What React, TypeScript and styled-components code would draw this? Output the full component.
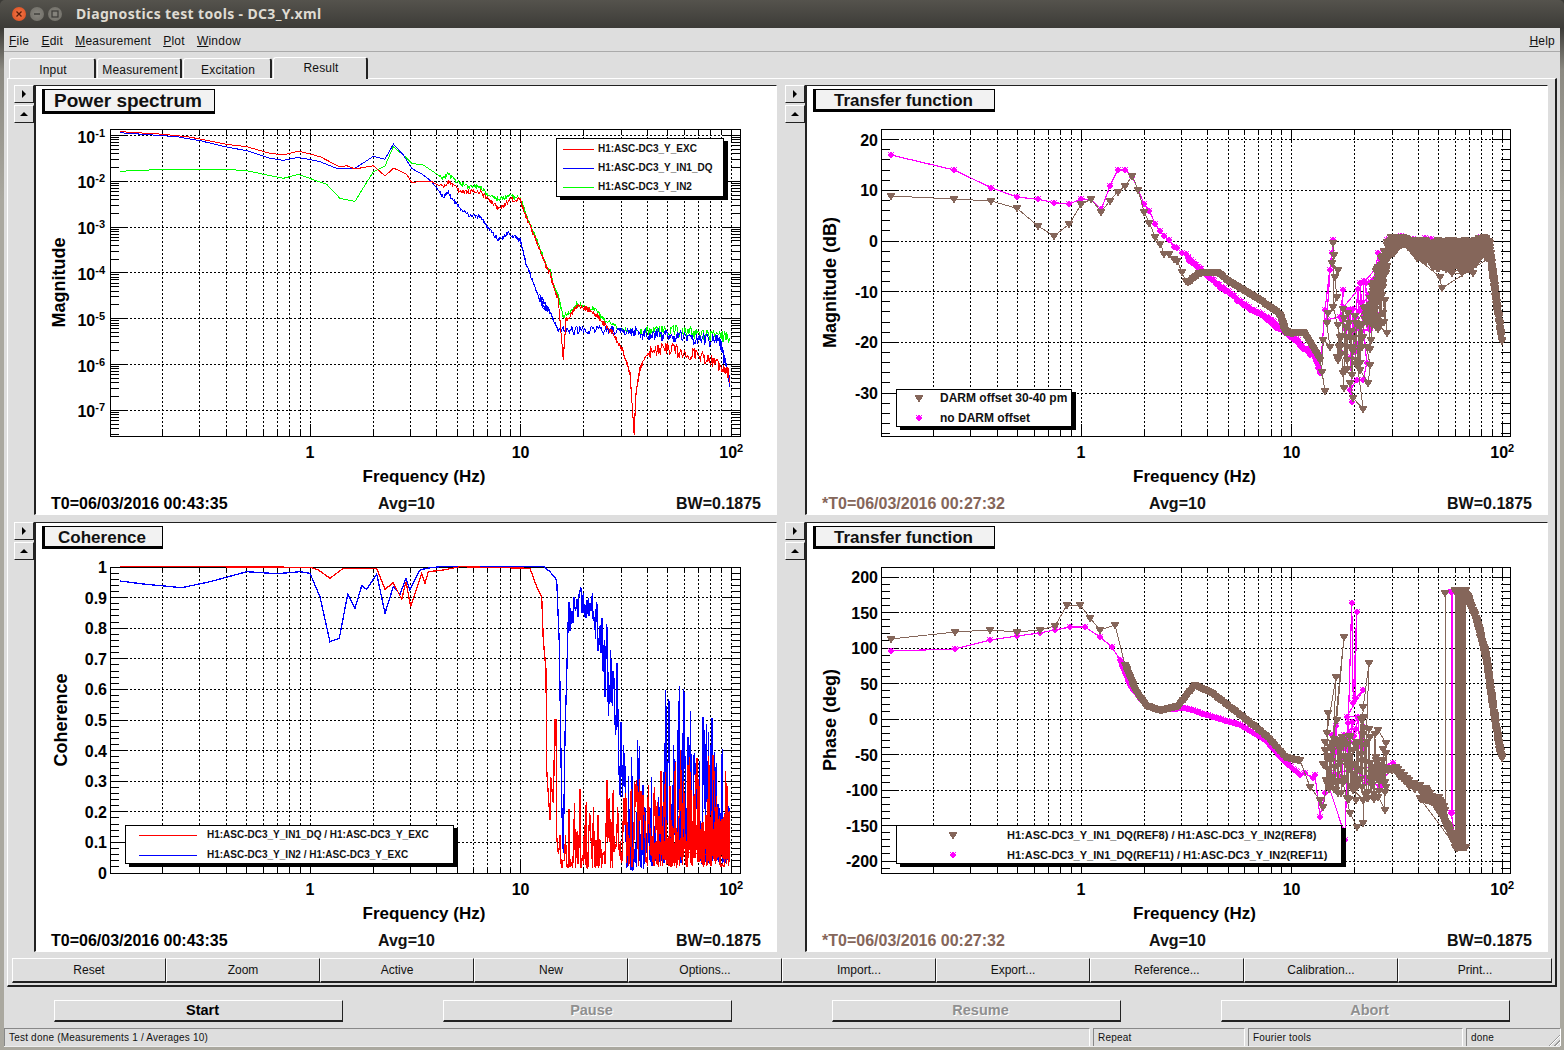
import React from "react";
import styled, { createGlobalStyle } from "styled-components";

type Pt = [number, number];
type Range = [number, number, number];

// --- data helpers: every curve is written in page pixels, read off the plots ---
function seeded(seed: number) {
  let a = seed;
  return () => {
    a = (a + 0x6d2b79f5) | 0;
    let t = Math.imul(a ^ (a >>> 15), 1 | a);
    t = (t + Math.imul(t ^ (t >>> 7), 61 | t)) ^ t;
    return ((t ^ (t >>> 14)) >>> 0) / 4294967296;
  };
}

const fromZoom = (ox: number, oy: number, pts: Pt[]): Pt[] =>
  pts.map(([x, y]) => [ox + x / 3, oy + y / 3] as Pt);

function resample(pts: Pt[], step: number): Pt[] {
  const out: Pt[] = [];
  for (let i = 0; i < pts.length - 1; i++) {
    const [x0, y0] = pts[i];
    const [x1, y1] = pts[i + 1];
    const n = Math.max(1, Math.round(Math.hypot(x1 - x0, y1 - y0) / step));
    for (let k = 0; k < n; k++) out.push([x0 + ((x1 - x0) * k) / n, y0 + ((y1 - y0) * k) / n]);
  }
  out.push(pts[pts.length - 1]);
  return out;
}

function jitter(pts: Pt[], amp: (x: number) => number, r: () => number): Pt[] {
  return pts.map(([x, y]) => [x, y + (r() - 0.5) * 2 * amp(x)] as Pt);
}

// random walk between a top and a bottom envelope, x in page pixels
function band(ox: number, oy: number, ranges: Range[], step: number, r: () => number, bias = 1): Pt[] {
  const out: Pt[] = [];
  const first = ox + ranges[0][0] / 3;
  const last = ox + ranges[ranges.length - 1][0] / 3;
  for (let x = first; x <= last; x += step) {
    const zx = (x - ox) * 3;
    let i = 0;
    while (i < ranges.length - 2 && ranges[i + 1][0] < zx) i++;
    const [a, t0, b0] = ranges[i];
    const [c, t1, b1] = ranges[i + 1];
    const f = (zx - a) / (c - a);
    const top = oy + (t0 + (t1 - t0) * f) / 3;
    const bottom = oy + (b0 + (b1 - b0) * f) / 3;
    out.push([x, bottom - (bottom - top) * Math.pow(r(), bias)]);
  }
  return out;
}

const toLine = (pts: Pt[]) => "M" + pts.map((p) => `${p[0].toFixed(1)} ${p[1].toFixed(1)}`).join("L");
const triangles = (pts: Pt[]) =>
  pts.map(([x, y]) => `M${Math.round(x) - 4.5} ${Math.round(y) - 3}h9l-4.5 8z`).join("");
const stars = (pts: Pt[]) =>
  pts
    .map(([x0, y0]) => {
      const x = Math.round(x0);
      const y = Math.round(y0);
      return `M${x - 3} ${y}h6M${x} ${y - 3}v6M${x - 2.5} ${y - 2.5}l5 5M${x + 2.5} ${y - 2.5}l-5 5`;
    })
    .join("");

interface Series {
  color: string;
  line: string;
  width: number;
  markers?: string;
  star?: boolean;
}

const RED = "#ff0000";
const BLUE = "#0000ff";
const GREEN = "#00ff00";
const BROWN = "#85665a";
const MAGENTA = "#ff00ff";

// --- power spectrum ---
const r1 = seeded(11);
const spectrumRed = jitter(
  resample(
    [
      ...fromZoom(110, 125, [[30, 20], [150, 27], [230, 35], [270, 42], [350, 58], [410, 65], [480, 85], [520, 90], [565, 78], [630, 95], [690, 126], [710, 122], [735, 132], [790, 122], [825, 153], [850, 130], [865, 135], [890, 148], [905, 173], [940, 168], [965, 170], [1000, 188], [1015, 170], [1050, 198], [1075, 202], [1110, 200], [1135, 222], [1165, 250], [1180, 245], [1200, 225], [1230, 225], [1250, 280], [1280, 350], [1310, 430], [1320, 443]]),
      ...fromZoom(530, 280, [[68, 10], [85, 60], [95, 180], [100, 235], [108, 120], [130, 95], [140, 80], [170, 85], [200, 105], [225, 135], [250, 160], [280, 215], [300, 280], [312, 462], [318, 340], [330, 265], [345, 235], [365, 210], [410, 205], [450, 215], [500, 225], [550, 245], [580, 260], [600, 290]]),
    ],
    0.8
  ),
  (x) => (x < 440 ? 0 : x < 566 ? 2.2 : x < 640 ? 2.4 : x < 650 ? 2.5 : 6.5),
  r1
);
const spectrumBlue = jitter(
  resample(
    [
      ...fromZoom(110, 125, [[30, 23], [100, 28], [200, 35], [270, 47], [350, 66], [410, 77], [480, 100], [520, 106], [565, 97], [630, 110], [680, 130], [735, 130], [790, 94], [825, 103], [850, 57], [880, 90], [905, 130], [940, 150], [965, 170], [1000, 215], [1015, 205], [1050, 250], [1075, 268], [1110, 275], [1135, 310], [1165, 345], [1195, 325], [1230, 345], [1250, 420], [1280, 500], [1300, 550], [1320, 558]]),
      ...fromZoom(530, 280, [[30, 50], [45, 90], [60, 95], [70, 120], [85, 150], [130, 150], [170, 150], [220, 150], [270, 150], [350, 160], [420, 170], [500, 175], [570, 180], [585, 250], [600, 305]]),
    ],
    0.8
  ),
  (x) => (x < 440 ? 0 : x < 560 ? 2 : x < 640 ? 4.5 : 7),
  r1
);
const spectrumGreen = jitter(
  resample(
    [
      ...fromZoom(110, 125, [[30, 139], [80, 136], [180, 133], [350, 133], [410, 137], [480, 152], [520, 160], [565, 148], [650, 178], [690, 220], [735, 229], [790, 140], [825, 123], [850, 65], [885, 95], [905, 115], [940, 120], [1000, 160], [1015, 148], [1050, 175], [1075, 185], [1110, 185], [1135, 212], [1165, 225], [1200, 212], [1230, 220], [1250, 275], [1280, 345], [1310, 425], [1320, 438]]),
      ...fromZoom(530, 280, [[68, 8], [85, 50], [100, 110], [130, 90], [140, 72], [170, 80], [200, 92], [225, 122], [280, 150], [350, 155], [420, 150], [500, 160], [600, 172]]),
    ],
    0.8
  ),
  (x) => (x < 440 ? 0 : x < 640 ? 2.2 : 6),
  r1
);

// --- magnitude transfer function ---
const r2 = seeded(23);
const magBrown: Pt[] = [
  ...fromZoom(880, 130, [[33, 198], [223, 207], [333, 213], [411, 235], [474, 288], [522, 318], [568, 282], [604, 222], [633, 208], [664, 245], [690, 212], [713, 185], [736, 167], [757, 138], [775, 180], [792, 245], [808, 278], [826, 322], [841, 342], [853, 372], [868, 372], [883, 388], [892, 392], [905, 425], [917, 452], [925, 457]]),
  ...resample(fromZoom(880, 130, [[925, 457], [940, 445], [958, 430], [975, 425], [1010, 425], [1040, 450], [1080, 475], [1130, 505], [1170, 530], [1200, 555], [1215, 600], [1240, 610]]), 2),
  ...resample(fromZoom(1270, 220, [[0, 260], [30, 285], [45, 335], [100, 335], [130, 385], [150, 420]]), 2),
  ...fromZoom(1270, 220, [[165, 512], [155, 455], [160, 360], [180, 380], [170, 310], [175, 280], [190, 260], [200, 230], [195, 170], [205, 150], [185, 130], [192, 105], [190, 70], [190, 260], [210, 350], [220, 460], [222, 505], [240, 490], [250, 535], [280, 568], [260, 420], [270, 450], [295, 490], [300, 435], [290, 380], [250, 380], [230, 350], [270, 320], [300, 300], [320, 310], [350, 340], [345, 240], [340, 280], [320, 230], [310, 205], [330, 180], [345, 160]]),
  ...band(1270, 220, [[200, 240, 430], [250, 290, 480], [300, 230, 430], [345, 160, 300]], 0.9, r2),
  ...band(1270, 220, [[300, 210, 320], [350, 60, 150], [360, 50, 110], [400, 50, 70], [440, 60, 105], [480, 60, 140], [520, 60, 150], [560, 60, 140], [600, 60, 150], [640, 50, 110], [660, 60, 120]], 0.2, r2),
  ...fromZoom(1270, 220, [[515, 205], [510, 170], [440, 115], [610, 160], [490, 140], [545, 160], [575, 160]]),
  ...jitter(resample(fromZoom(1270, 220, [[660, 90], [680, 250], [695, 360]]), 1), () => 3, r2),
];
const magMagenta: Pt[] = [
  ...fromZoom(880, 130, [[33, 75], [223, 120], [333, 173], [411, 201], [474, 208], [522, 218], [568, 222], [604, 207], [633, 208], [664, 238], [690, 168], [713, 120], [736, 120], [757, 140], [775, 180], [792, 222], [808, 242], [826, 283], [841, 303], [853, 318], [868, 330], [883, 350], [892, 355], [905, 368], [917, 372], [925, 385]]),
  ...jitter(resample(fromZoom(880, 130, [[925, 385], [958, 415], [990, 445], [1020, 470], [1050, 490], [1080, 517], [1130, 545], [1170, 570], [1200, 590], [1240, 625], [1260, 640]]), 1.5), () => 1.5, r2),
  ...jitter(resample(fromZoom(1270, 220, [[0, 310], [50, 340], [100, 385], [135, 410], [150, 460]]), 1.5), () => 1.5, r2),
  ...fromZoom(1270, 220, [[165, 270], [190, 60], [185, 100], [180, 150], [170, 300], [210, 290], [220, 210], [215, 300], [240, 275], [245, 545], [240, 510], [260, 480], [280, 480], [290, 430], [270, 190], [275, 260], [295, 225], [300, 330], [240, 330], [230, 320], [260, 380], [310, 180], [325, 100], [325, 140], [330, 130]]),
  ...band(1270, 220, [[220, 250, 460], [330, 120, 300]], 1.6, r2),
  ...band(1270, 220, [[340, 60, 130], [380, 45, 70], [450, 50, 70], [530, 60, 80], [600, 60, 80], [640, 50, 70]], 2, r2),
];

// --- coherence ---
const r3 = seeded(37);
const coBlue: Pt[] = [
  ...fromZoom(110, 560, [[30, 63], [100, 72], [215, 83], [300, 65], [410, 35], [500, 41], [570, 35], [600, 40], [630, 110], [660, 245], [688, 235], [713, 103], [735, 145], [755, 77], [770, 88], [800, 42], [825, 160], [850, 80], [870, 103], [888, 55], [900, 90], [930, 30], [950, 25], [1000, 19], [1300, 19], [1320, 35], [1340, 60], [1348, 250]]),
  ...fromZoom(540, 570, [[65, 700], [70, 850], [75, 500]]),
  ...band(540, 570, [[85, 100, 190], [130, 40, 150], [160, 70, 190], [190, 120, 350], [215, 220, 520], [240, 300, 700], [255, 530, 900]], 0.8, r3),
  ...band(540, 570, [[255, 530, 900], [300, 480, 900], [320, 600, 900], [350, 480, 880], [380, 310, 880], [420, 340, 880], [500, 430, 880], [540, 450, 880], [570, 500, 880]], 0.6, r3, 1.9),
];
const coRed: Pt[] = [
  ...fromZoom(110, 560, [[30, 19], [600, 22], [625, 30], [660, 55], [700, 25], [800, 25], [825, 88], [850, 68], [875, 118], [888, 65], [902, 140], [935, 40], [945, 70], [955, 35], [1000, 30], [1050, 20], [1260, 25], [1280, 80], [1295, 110], [1300, 240], [1308, 330]]),
  ...fromZoom(540, 570, [[20, 600], [30, 750], [32, 620], [40, 700], [45, 450], [48, 450], [50, 800]]),
  ...band(540, 570, [[55, 760, 895], [100, 680, 895], [130, 640, 895], [180, 700, 895], [205, 560, 895], [250, 640, 895], [300, 600, 895], [350, 620, 895], [420, 470, 895], [450, 540, 890], [570, 560, 890]], 0.9, r3, 2),
  ...band(540, 570, [[330, 820, 890], [400, 790, 890], [480, 760, 885], [570, 720, 885]], 0.2, r3),
];

// --- phase transfer function ---
const r4 = seeded(53);
const phaseMagentaLeft: Pt[] = [
  [891, 651], [955, 649], [990, 640], [1017, 636], [1040, 633], [1055, 630], [1070, 627], [1085, 627], [1100, 637], [1112, 647], [1120, 660],
  ...resample([[1120, 660], [1130, 685], [1145, 705], [1160, 710], [1185, 708], [1210, 716], [1240, 725], [1265, 740], [1285, 762], [1300, 775]], 2),
  ...fromZoom(1300, 570, [[15, 610], [40, 625], [45, 615], [60, 740], [75, 670], [80, 630], [130, 780], [135, 810], [155, 100], [160, 400], [170, 125], [165, 385], [190, 360], [140, 440], [175, 440], [105, 550], [200, 630], [240, 650], [280, 580]]),
  ...band(1300, 570, [[90, 470, 620], [200, 430, 660]], 2, r4),
];
const phaseMagentaRight: Pt[] = fromZoom(1300, 570, [[457, 65], [457, 730], [454, 730], [454, 65], [454, 730], [470, 835]]);

function phaseWall(): Pt[] {
  const out: Pt[] = [];
  for (let zx = 465; zx <= 497; zx += 1.5) {
    out.push([zx, zx % 3 === 0 ? 830 : 60], [zx, zx % 3 === 0 ? 60 : 830]);
  }
  return fromZoom(1300, 570, out);
}

const phaseBrownLeft: Pt[] = [
  [891, 639], [955, 632], [990, 630], [1017, 632], [1040, 630], [1055, 626], [1067, 605], [1080, 605], [1090, 618], [1100, 630], [1115, 625], [1125, 665],
  ...resample([[1125, 665], [1135, 690], [1145, 705], [1160, 710], [1180, 705], [1195, 685], [1210, 692], [1240, 715], [1265, 735], [1285, 757], [1300, 760]], 2),
  ...fromZoom(1300, 570, [[0, 570], [30, 650], [60, 690], [70, 710], [80, 640], [85, 430], [80, 490], [108, 320], [100, 520], [132, 200], [110, 450], [90, 530], [130, 640], [150, 730], [170, 770], [190, 760], [207, 280], [190, 410], [180, 600], [210, 500], [235, 480], [258, 520], [250, 570], [235, 680], [255, 720], [250, 590], [190, 690], [160, 660], [150, 500], [170, 520], [130, 510]]),
  ...band(1300, 570, [[70, 510, 660], [130, 490, 690], [190, 440, 700], [260, 520, 680]], 0.6, r4),
];
const phaseBrownRight: Pt[] = [
  ...jitter(resample(fromZoom(1300, 570, [[220, 600], [290, 600], [330, 640], [380, 665], [420, 720], [470, 830]]), 1), () => 3, r4),
  ...jitter(resample(fromZoom(1300, 570, [[360, 680], [420, 690], [435, 720]]), 1), () => 3, r4),
  ...fromZoom(1300, 570, [[435, 720], [435, 70], [435, 720], [470, 830]]),
  ...phaseWall(),
  ...jitter(resample(fromZoom(1300, 570, [[465, 62], [500, 75], [530, 150], [560, 270], [580, 420], [600, 540], [605, 565]]), 0.8), () => 2.5, r4),
];

interface Plot {
  title: string;
  titleWidth: number;
  titleHeight: number;
  left: number;
  top: number;
  frame: { l: number; r: number; t: number; b: number };
  yTitle: string;
  yTitleX: number;
  labelShift: number;
  labelGap: number;
  majors: { y: number; label: React.ReactNode }[];
  minors: number[];
  series: Series[];
  legendTextAt: number;
  legendFont: number;
  legendRow: number;
  legendBox: { left: number; top: number; width: number; height: number };
  legend: { text: string; color: string; line?: [number, number]; marker?: "tri" | "star"; cx?: number }[];
  stamp: string;
  stampColor: string;
}

function logTicks(): number[] {
  const out: number[] = [];
  for (let d = -1; d <= 1; d++) for (let m = 1; m <= 9; m++) out.push(m * Math.pow(10, d));
  return [...out.filter((f) => f > 0.11), 100];
}

const X_TICKS = logTicks();
const xOf = (frame: Plot["frame"], f: number) => frame.l + 200 + 210.6 * Math.log10(f);
const isMajorX = (f: number) => f === 1 || f === 10 || f === 100;

function linearAxis(zero: number, perUnit: number, from: number, to: number, major: number, minor: number, top: number, bottom: number, label: (v: number) => string) {
  const majors: Plot["majors"] = [];
  const minors: number[] = [];
  for (let i = Math.round(from / minor); i * minor <= to + 1e-6; i++) {
    const v = i * minor;
    const y = zero - v * perUnit;
    if (y < top || y > bottom) continue;
    const isMajor = Math.abs(v / major - Math.round(v / major)) < 1e-6;
    if (isMajor) majors.push({ y, label: label(v) });
    else minors.push(y);
  }
  return { majors, minors };
}

function logAxis() {
  const majors: Plot["majors"] = [];
  const minors: number[] = [];
  for (let d = -1; d >= -7; d--) {
    const y = 135.5 + (-1 - d) * 45.8;
    majors.push({
      y,
      label: (
        <>
          10
          <tspan fontSize="11" dy="-6">
            {d}
          </tspan>
        </>
      ),
    });
  }
  for (let d = -8; d <= -1; d++) {
    const y10 = 135.5 + (-1 - d) * 45.8;
    for (let m = 2; m <= 9; m++) {
      const y = y10 - Math.log10(m) * 45.8;
      if (y > 129 && y < 436) minors.push(y);
    }
  }
  return { majors, minors };
}

const frameTop = { l: 110, r: 740, t: 129, b: 436 };
const frameBottom = { l: 110, r: 740, t: 567, b: 873 };
const frameTopRight = { l: 881, r: 1510, t: 129, b: 436 };
const frameBottomRight = { l: 881, r: 1510, t: 567, b: 873 };

const plots: Plot[] = [
  {
    title: "Power spectrum",
    titleWidth: 173,
    titleHeight: 25,
    left: 36,
    top: 86,
    frame: frameTop,
    yTitle: "Magnitude",
    yTitleX: 59,
    labelShift: 7,
    labelGap: 5,
    ...logAxis(),
    series: [
      { color: GREEN, line: toLine(spectrumGreen), width: 1 },
      { color: BLUE, line: toLine(spectrumBlue), width: 1 },
      { color: RED, line: toLine(spectrumRed), width: 1 },
    ],
    legendTextAt: 42,
    legendFont: 10,
    legendRow: 19,
    legendBox: { left: 520, top: 52, width: 168, height: 59 },
    legend: [
      { text: "H1:ASC-DC3_Y_EXC", color: RED, line: [6, 37] },
      { text: "H1:ASC-DC3_Y_IN1_DQ", color: BLUE, line: [6, 37] },
      { text: "H1:ASC-DC3_Y_IN2", color: GREEN, line: [6, 37] },
    ],
    stamp: "T0=06/03/2016 00:43:35",
    stampColor: "#000",
  },
  {
    title: "Transfer function",
    titleWidth: 182,
    titleHeight: 23,
    left: 807,
    top: 86,
    frame: frameTopRight,
    yTitle: "Magnitude (dB)",
    yTitleX: 830,
    labelShift: 6,
    labelGap: 3,
    ...linearAxis(241, 5.07, -40, 20, 10, 2, 129, 436, (v) => String(v)),
    series: [
      { color: MAGENTA, line: toLine(magMagenta), width: 1.2, markers: stars(magMagenta), star: true },
      { color: BROWN, line: toLine(magBrown), width: 1, markers: triangles(magBrown) },
    ],
    legendTextAt: 44,
    legendFont: 12,
    legendRow: 20,
    legendBox: { left: 89, top: 303, width: 176, height: 38 },
    legend: [
      { text: "DARM offset 30-40 pm", color: BROWN, marker: "tri", cx: 22 },
      { text: "no DARM offset", color: MAGENTA, marker: "star", cx: 22 },
    ],
    stamp: "*T0=06/03/2016 00:27:32",
    stampColor: BROWN,
  },
  {
    title: "Coherence",
    titleWidth: 121,
    titleHeight: 23,
    left: 36,
    top: 523,
    frame: frameBottom,
    yTitle: "Coherence",
    yTitleX: 61,
    labelShift: 6,
    labelGap: 3,
    ...linearAxis(873, 306, 0, 1, 0.1, 0.02, 567, 873, (v) => String(Math.round(v * 10) / 10)),
    series: [
      { color: BLUE, line: toLine(coBlue), width: 1.3 },
      { color: RED, line: toLine(coRed), width: 1.3 },
    ],
    legendTextAt: 82,
    legendFont: 10,
    legendRow: 20,
    legendBox: { left: 89, top: 302, width: 329, height: 39 },
    legend: [
      { text: "H1:ASC-DC3_Y_IN1_DQ / H1:ASC-DC3_Y_EXC", color: RED, line: [13, 71] },
      { text: "H1:ASC-DC3_Y_IN2 / H1:ASC-DC3_Y_EXC", color: BLUE, line: [13, 71] },
    ],
    stamp: "T0=06/03/2016 00:43:35",
    stampColor: "#000",
  },
  {
    title: "Transfer function",
    titleWidth: 182,
    titleHeight: 23,
    left: 807,
    top: 523,
    frame: frameBottomRight,
    yTitle: "Phase (deg)",
    yTitleX: 830,
    labelShift: 6,
    labelGap: 3,
    ...linearAxis(719, 0.71, -250, 200, 50, 10, 567, 873, (v) => String(v)),
    series: [
      {
        color: MAGENTA,
        line: toLine(phaseMagentaLeft) + toLine(phaseMagentaRight),
        width: 1.2,
        markers: stars([...phaseMagentaLeft, ...phaseMagentaRight]),
        star: true,
      },
      {
        color: BROWN,
        line: toLine(phaseBrownLeft) + toLine(phaseBrownRight),
        width: 1,
        markers: triangles([...phaseBrownLeft, ...phaseBrownRight]),
      },
    ],
    legendTextAt: 111,
    legendFont: 11,
    legendRow: 20,
    legendBox: { left: 89, top: 302, width: 446, height: 39 },
    legend: [
      { text: "H1:ASC-DC3_Y_IN1_DQ(REF8) / H1:ASC-DC3_Y_IN2(REF8)", color: BROWN, marker: "tri", cx: 56 },
      { text: "H1:ASC-DC3_Y_IN1_DQ(REF11) / H1:ASC-DC3_Y_IN2(REF11)", color: MAGENTA, marker: "star", cx: 56 },
    ],
    stamp: "*T0=06/03/2016 00:27:32",
    stampColor: BROWN,
  },
];

const GlobalStyle = createGlobalStyle`
  html, body { margin: 0; padding: 0; background: #a8a69e; }
  body { width: 1564px; height: 1050px; overflow: hidden; font-family: "Liberation Sans", Arial, sans-serif; }
`;

const Desktop = styled.div`
  width: 1564px;
  height: 1050px;
  display: flex;
  flex-direction: column;
  background: linear-gradient(#3c3b37, #3c3b37 28px, #8b8981 70px, #aaa89f 200px);
`;

const TitleBar = styled.header`
  height: 28px;
  flex: none;
  display: flex;
  align-items: center;
  padding-left: 12px;
  background: linear-gradient(#55534d, #3c3b37);
  border-radius: 5px 5px 0 0;
`;

const WinButton = styled.span<{ $close?: boolean }>`
  width: 14px;
  height: 14px;
  margin-right: 4px;
  border-radius: 50%;
  display: flex;
  align-items: center;
  justify-content: center;
  background: ${(p) => (p.$close ? "radial-gradient(#f47a4c, #d9491b)" : "radial-gradient(#88867f, #6d6b64)")};
  svg {
    display: block;
  }
`;

const TitleText = styled.span`
  margin-left: 10px;
  padding-bottom: 2px;
  color: #dfdbd2;
  font: bold 14px "Noto Sans", sans-serif;
  letter-spacing: 0.36px;
`;

const Window = styled.div`
  margin: 0 4px;
  height: 1018px;
  display: flex;
  flex-direction: column;
  background: #dedede;
  color: #111;
`;

const MenuBar = styled.nav`
  height: 24px;
  flex: none;
  box-sizing: border-box;
  display: flex;
  align-items: center;
  gap: 12.2px;
  padding: 3px 5px 0 5px;
  border-bottom: 1px solid #aaa;
  font-size: 12px;
  letter-spacing: 0.22px;
  span:last-child {
    margin-left: auto;
  }
`;

const TabRow = styled.div`
  height: 26px;
  flex: none;
  display: flex;
  align-items: flex-end;
  padding-left: 5px;
`;

const Tab = styled.div<{ $width: number; $active?: boolean }>`
  width: ${(p) => p.$width}px;
  height: ${(p) => (p.$active ? 22 : 20)}px;
  box-sizing: border-box;
  margin-right: 1px;
  border-top: 1px solid #fff;
  border-left: 1px solid #fff;
  border-right: 2px solid #222;
  border-radius: 3px 3px 0 0;
  background: #dedede;
  position: relative;
  z-index: ${(p) => (p.$active ? 1 : 0)};
  margin-bottom: ${(p) => (p.$active ? -1 : 0)}px;
  padding: ${(p) => (p.$active ? 3 : 4)}px 0 0 2px;
  text-align: center;
  font-size: 12px;
  letter-spacing: 0.2px;
`;

const Panel = styled.main`
  margin-left: 3px;
  width: 1550px;
  height: 909px;
  flex: none;
  box-sizing: border-box;
  border-top: 1px solid #fff;
  border-left: 1px solid #fff;
  border-right: 2px solid #222;
  border-bottom: 2px solid #222;
  padding: 6px 0 0 4px;
`;

const PlotGrid = styled.div`
  display: grid;
  grid-template-columns: 765px 765px;
  grid-template-rows: 430px 430px;
  column-gap: 6px;
  row-gap: 7px;
  padding-left: 2px;
`;

const PlotCell = styled.section`
  display: flex;
  align-items: flex-start;
`;

const SideButtons = styled.div`
  width: 20px;
  display: flex;
  flex-direction: column;
  gap: 2px;
`;

const SideButton = styled.div<{ $dir: "right" | "up" }>`
  height: 18px;
  box-sizing: border-box;
  border-top: 1px solid #fff;
  border-left: 1px solid #fff;
  border-right: 1px solid #222;
  border-bottom: 1px solid #222;
  display: flex;
  align-items: center;
  justify-content: center;
  &::after {
    content: "";
    width: 0;
    height: 0;
    border-style: solid;
    ${(p) =>
      p.$dir === "right"
        ? "border-width: 4px 0 4px 4px; border-color: transparent transparent transparent #000;"
        : "border-width: 0 4px 4px 4px; border-color: transparent transparent #000 transparent;"}
  }
`;

const Canvas = styled.div`
  position: relative;
  width: 740px;
  height: 428px;
  display: flex;
  flex-direction: column;
  background: #fff;
  border-top: 1px solid #222;
  border-left: 2px solid #222;
  border-right: 1px solid #fff;
  border-bottom: 1px solid #fff;
`;

const ChartSvg = styled.svg`
  display: block;
  flex: none;
`;

const TitleBox = styled.div<{ $width: number; $height: number }>`
  position: absolute;
  left: 6px;
  top: 3px;
  width: ${(p) => p.$width}px;
  height: ${(p) => p.$height}px;
  box-sizing: border-box;
  display: flex;
  align-items: center;
  justify-content: center;
  background: #f2f2f2;
  border: 1px solid #000;
  border-left-width: 3px;
  border-bottom-width: 3px;
  font-weight: bold;
  padding: ${(p) => (p.$height > 24 ? "0 3px 0 0" : "2px 3px 0 0")};
  font-size: ${(p) => (p.$height > 24 ? 19 : 17)}px;
`;

const Legend = styled.div<{ $left: number; $top: number; $width: number; $height: number; $font: number }>`
  position: absolute;
  left: ${(p) => p.$left}px;
  top: ${(p) => p.$top}px;
  width: ${(p) => p.$width}px;
  height: ${(p) => p.$height}px;
  box-sizing: border-box;
  display: flex;
  flex-direction: column;
  justify-content: center;
  background: #fff;
  border: 1px solid #000;
  box-shadow: 4px 3px 0 #000;
  font-weight: bold;
  font-size: ${(p) => p.$font}px;
  white-space: nowrap;
`;

const LegendRow = styled.div<{ $textAt: number; $height: number }>`
  flex: none;
  height: ${(p) => p.$height}px;
  display: grid;
  grid-template-columns: ${(p) => p.$textAt - 1}px 1fr;
  align-items: center;
  svg {
    display: block;
  }
`;

const Footer = styled.footer`
  flex: 1;
  display: grid;
  grid-template-columns: 327px 1fr auto;
  align-items: center;
  padding: 2px 15px 0;
  font-weight: bold;
  font-size: 16px;
  white-space: nowrap;
`;

const Stamp = styled.span<{ $color: string }>`
  color: ${(p) => p.$color};
`;

const TickLabel = styled.text`
  font-family: "Liberation Sans", Arial, sans-serif;
  font-weight: bold;
  font-size: 16px;
  fill: #000;
`;

const AxisTitle = styled.text<{ $size: number }>`
  font-family: "Liberation Sans", Arial, sans-serif;
  font-weight: bold;
  font-size: ${(p) => p.$size}px;
  fill: #000;
  text-anchor: middle;
`;

const Toolbar = styled.div`
  display: grid;
  grid-template-columns: repeat(10, 154px);
  margin-top: 6px;
`;

const ToolButton = styled.button`
  height: 25px;
  padding: 0;
  box-sizing: border-box;
  border: 0;
  border-top: 1px solid #fff;
  border-left: 1px solid #fff;
  border-right: 1px solid #222;
  border-bottom: 2px solid #222;
  background: #dedede;
  color: #111;
  font: 12px "Liberation Sans", Arial, sans-serif;
`;

const ActionBar = styled.div`
  flex: none;
  height: 41px;
  box-sizing: border-box;
  padding-top: 13px;
  display: flex;
  justify-content: space-around;
  align-items: flex-start;
`;

const ActionButton = styled.button<{ $off?: boolean }>`
  width: 289px;
  height: 22px;
  padding: 0 0 2px 8px;
  box-sizing: border-box;
  border: 0;
  border-top: 1px solid #fff;
  border-left: 1px solid #fff;
  border-right: 1px solid #222;
  border-bottom: 2px solid #222;
  background: #dedede;
  color: ${(p) => (p.$off ? "#8f8f8f" : "#000")};
  text-shadow: ${(p) => (p.$off ? "1px 1px 0 #fff" : "none")};
  font: bold 14.5px "Liberation Sans", Arial, sans-serif;
`;

const StatusBar = styled.footer`
  position: relative;
  flex: none;
  height: 18px;
  display: grid;
  grid-template-columns: 1086px 152px 215px 95px;
  column-gap: 3px;
  border-bottom: 1px solid #eee;
`;

const StatusCell = styled.div`
  box-sizing: border-box;
  border-top: 1px solid #888;
  border-left: 1px solid #888;
  border-right: 1px solid #fff;
  padding: 3px 0 0 4px;
  font-size: 10px;
  letter-spacing: 0.2px;
  white-space: nowrap;
`;

const Grip = styled.span`
  position: absolute;
  right: 0;
  bottom: 0;
  width: 13px;
  height: 13px;
  background: repeating-linear-gradient(135deg, transparent 0 2px, #999 2px 3px, #fff 3px 4px);
  clip-path: polygon(100% 0, 100% 100%, 0 100%);
`;

function PlotChart({ plot }: { plot: Plot }) {
  const { frame } = plot;
  const midX = (frame.l + frame.r) / 2 - 1;
  const midY = (frame.t + frame.b) / 2;
  const width = 740;
  const height = 405;
  return (
    <ChartSvg width={width} height={height} viewBox={`${plot.left} ${plot.top} ${width} ${height}`}>
      <g stroke="#000" strokeWidth="1" strokeDasharray="1.5 2.5" shapeRendering="crispEdges">
        {X_TICKS.map((f) => (
          <line key={f} x1={xOf(frame, f)} x2={xOf(frame, f)} y1={frame.t} y2={frame.b} />
        ))}
        {plot.majors.map((m) => (
          <line key={m.y} x1={frame.l} x2={frame.r} y1={m.y} y2={m.y} />
        ))}
      </g>
      <g stroke="#000" strokeWidth="1" fill="none" shapeRendering="crispEdges">
        <rect x={frame.l} y={frame.t} width={frame.r - frame.l} height={frame.b - frame.t} />
        {X_TICKS.map((f) => {
          const x = xOf(frame, f);
          const len = isMajorX(f) ? 12 : 6;
          return <path key={f} d={`M${x} ${frame.t}v${len}M${x} ${frame.b}v${-len}`} />;
        })}
        {plot.majors.map((m) => (
          <path key={m.y} d={`M${frame.l} ${m.y}h18M${frame.r} ${m.y}h-18`} />
        ))}
        {plot.minors.map((y) => (
          <path key={y} d={`M${frame.l} ${y}h9M${frame.r} ${y}h-9`} />
        ))}
      </g>
      {plot.series.map((s) => (
        <g key={s.color} shapeRendering="crispEdges">
          <path d={s.line} fill="none" stroke={s.color} strokeWidth={s.width} />
          {s.markers &&
            (s.star ? (
              <path d={s.markers} fill="none" stroke={s.color} strokeWidth="1.2" />
            ) : (
              <path d={s.markers} fill={s.color} />
            ))}
        </g>
      ))}
      {plot.majors.map((m) => (
        <TickLabel key={m.y} x={frame.l - plot.labelGap} y={m.y + plot.labelShift} textAnchor="end">
          {m.label}
        </TickLabel>
      ))}
      {[1, 10].map((f) => (
        <TickLabel key={f} x={xOf(frame, f)} y={frame.b + 22} textAnchor="middle">
          {f}
        </TickLabel>
      ))}
      <TickLabel x={xOf(frame, 100)} y={frame.b + 22} textAnchor="middle">
        10
        <tspan fontSize="11" dy="-6">
          2
        </tspan>
      </TickLabel>
      <AxisTitle $size={17} x={midX} y={frame.b + 46}>
        Frequency (Hz)
      </AxisTitle>
      <AxisTitle $size={18} transform={`translate(${plot.yTitleX + 6} ${midY}) rotate(-90)`}>
        {plot.yTitle}
      </AxisTitle>
    </ChartSvg>
  );
}

function LegendSample({ item, width }: { item: Plot["legend"][number]; width: number }) {
  return (
    <svg width={width} height="10" shapeRendering="crispEdges">
      {item.line && <line x1={item.line[0]} x2={item.line[1]} y1="5.5" y2="5.5" stroke={item.color} />}
      {item.marker === "tri" && <path d={triangles([[item.cx ?? 0, 5]])} fill={item.color} />}
      {item.marker === "star" && <path d={stars([[item.cx ?? 0, 5]])} fill="none" stroke={item.color} strokeWidth="1.2" />}
    </svg>
  );
}

function PlotPanel({ plot }: { plot: Plot }) {
  const box = plot.legendBox;
  return (
    <PlotCell>
      <SideButtons>
        <SideButton $dir="right" />
        <SideButton $dir="up" />
      </SideButtons>
      <Canvas>
        <PlotChart plot={plot} />
        <TitleBox $width={plot.titleWidth} $height={plot.titleHeight}>
          {plot.title}
        </TitleBox>
        <Legend $left={box.left} $top={box.top} $width={box.width} $height={box.height} $font={plot.legendFont}>
          {plot.legend.map((item) => (
            <LegendRow key={item.text} $textAt={plot.legendTextAt} $height={plot.legendRow}>
              <LegendSample item={item} width={plot.legendTextAt - 1} />
              <span>{item.text}</span>
            </LegendRow>
          ))}
        </Legend>
        <Footer>
          <Stamp $color={plot.stampColor}>{plot.stamp}</Stamp>
          <span>Avg=10</span>
          <span>BW=0.1875</span>
        </Footer>
      </Canvas>
    </PlotCell>
  );
}

const MENU = ["File", "Edit", "Measurement", "Plot", "Window"];
const TOOLS = ["Reset", "Zoom", "Active", "New", "Options...", "Import...", "Export...", "Reference...", "Calibration...", "Print..."];

export default function App() {
  return (
    <Desktop>
      <GlobalStyle />
      <TitleBar>
        <WinButton $close>
          <svg width="8" height="8" viewBox="0 0 8 8">
            <path d="M1.5 1.5l5 5M6.5 1.5l-5 5" stroke="#5a1c08" strokeWidth="1.3" />
          </svg>
        </WinButton>
        <WinButton>
          <svg width="8" height="8" viewBox="0 0 8 8">
            <path d="M1 4h6" stroke="#3c3b37" strokeWidth="1.4" />
          </svg>
        </WinButton>
        <WinButton>
          <svg width="8" height="8" viewBox="0 0 8 8">
            <rect x="1" y="1" width="6" height="6" fill="none" stroke="#3c3b37" strokeWidth="1.2" />
          </svg>
        </WinButton>
        <TitleText>Diagnostics test tools - DC3_Y.xml</TitleText>
      </TitleBar>
      <Window>
        <MenuBar>
          {MENU.map((m) => (
            <span key={m}>
              <u>{m[0]}</u>
              {m.slice(1)}
            </span>
          ))}
          <span>
            <u>H</u>elp
          </span>
        </MenuBar>
        <TabRow>
          <Tab $width={87}>Input</Tab>
          <Tab $width={85}>Measurement</Tab>
          <Tab $width={89}>Excitation</Tab>
          <Tab $width={95} $active>
            Result
          </Tab>
        </TabRow>
        <Panel>
          <PlotGrid>
            {plots.map((p) => (
              <PlotPanel key={p.yTitle} plot={p} />
            ))}
          </PlotGrid>
          <Toolbar>
            {TOOLS.map((t) => (
              <ToolButton key={t}>{t}</ToolButton>
            ))}
          </Toolbar>
        </Panel>
        <ActionBar>
          <ActionButton>Start</ActionButton>
          <ActionButton $off>Pause</ActionButton>
          <ActionButton $off>Resume</ActionButton>
          <ActionButton $off>Abort</ActionButton>
        </ActionBar>
        <StatusBar>
          <StatusCell>Test done (Measurements 1 / Averages 10)</StatusCell>
          <StatusCell>Repeat</StatusCell>
          <StatusCell>Fourier tools</StatusCell>
          <StatusCell>done</StatusCell>
          <Grip />
        </StatusBar>
      </Window>
    </Desktop>
  );
}
